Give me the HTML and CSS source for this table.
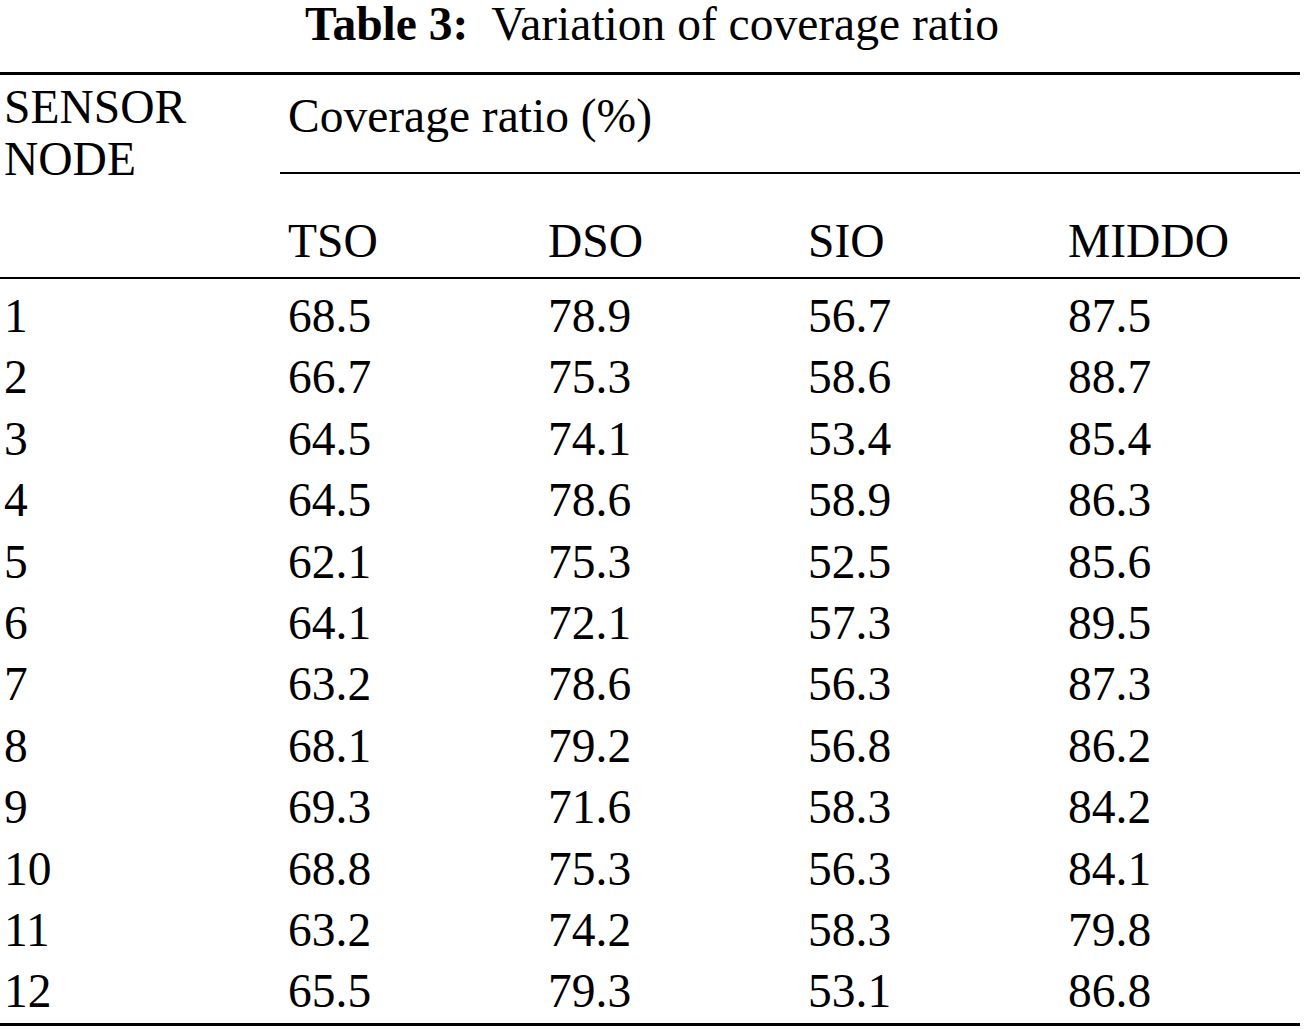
FILE: index.html
```html
<!DOCTYPE html>
<html>
<head>
<meta charset="utf-8">
<link rel="stylesheet" href="styles.css">
</head>
<body>
<div class="page">
  <div class="caption"><b class="label">Table 3:</b> Variation of coverage ratio</div>
  <table class="data">
    <colgroup>
      <col class="c1"><col class="cn"><col class="cn"><col class="cn"><col class="c5">
    </colgroup>
    <thead>
      <tr class="h1">
        <th class="node" rowspan="2">SENSOR<br>NODE</th>
        <th class="group" colspan="4">Coverage ratio (%)</th>
      </tr>
      <tr class="h2">
        <th>TSO</th><th>DSO</th><th>SIO</th><th>MIDDO</th>
      </tr>
    </thead>
    <tbody>
      <tr class="first"><td>1</td><td>68.5</td><td>78.9</td><td>56.7</td><td>87.5</td></tr>
      <tr><td>2</td><td>66.7</td><td>75.3</td><td>58.6</td><td>88.7</td></tr>
      <tr><td>3</td><td>64.5</td><td>74.1</td><td>53.4</td><td>85.4</td></tr>
      <tr><td>4</td><td>64.5</td><td>78.6</td><td>58.9</td><td>86.3</td></tr>
      <tr><td>5</td><td>62.1</td><td>75.3</td><td>52.5</td><td>85.6</td></tr>
      <tr><td>6</td><td>64.1</td><td>72.1</td><td>57.3</td><td>89.5</td></tr>
      <tr><td>7</td><td>63.2</td><td>78.6</td><td>56.3</td><td>87.3</td></tr>
      <tr><td>8</td><td>68.1</td><td>79.2</td><td>56.8</td><td>86.2</td></tr>
      <tr><td>9</td><td>69.3</td><td>71.6</td><td>58.3</td><td>84.2</td></tr>
      <tr><td>10</td><td>68.8</td><td>75.3</td><td>56.3</td><td>84.1</td></tr>
      <tr><td>11</td><td>63.2</td><td>74.2</td><td>58.3</td><td>79.8</td></tr>
      <tr class="last"><td>12</td><td>65.5</td><td>79.3</td><td>53.1</td><td>86.8</td></tr>
    </tbody>
  </table>
</div>
</body>
</html>
```

FILE: styles.css
```css
html, body {
  margin: 0;
  padding: 0;
  background: #ffffff;
}

body {
  font-family: "Liberation Serif", "Times New Roman", serif;
  font-size: 47.5px;
  color: #000000;
}

.page {
  width: 1300px;
}

.caption {
  width: 1304px;
  text-align: center;
  line-height: 52px;
  margin-top: -2px;
  margin-bottom: 22px;
}

.caption .label {
  font-weight: bold;
  margin-right: 0.25em;
}

.data {
  width: 1300px;
  border-collapse: collapse;
  table-layout: fixed;
  border-top: 3px solid #000;
  border-bottom: 3px solid #000;
}

.c1 { width: 280px; }
.cn { width: 260px; }
.c5 { width: 240px; }

.data th,
.data td {
  font-weight: normal;
  text-align: left;
  padding: 0 0 0 8px;
  line-height: 52px;
  vertical-align: baseline;
}

.data th:first-child,
.data td:first-child {
  padding-left: 4px;
}

.data .node {
  vertical-align: top;
  padding-top: 6px;
  padding-left: 4px;
  border-bottom: 2px solid #000;
}

.h1 .group {
  padding-top: 15px;
  padding-bottom: 30px;
  border-bottom: 2px solid #000;
}

.h2 th {
  padding-top: 41px;
  padding-bottom: 10px;
  border-bottom: 2px solid #000;
}

.h2 th:first-child {
  padding-left: 8px;
}

.data tbody td {
  line-height: 61.4px;
}

.data tbody tr.first td {
  padding-top: 7px;
}
```
